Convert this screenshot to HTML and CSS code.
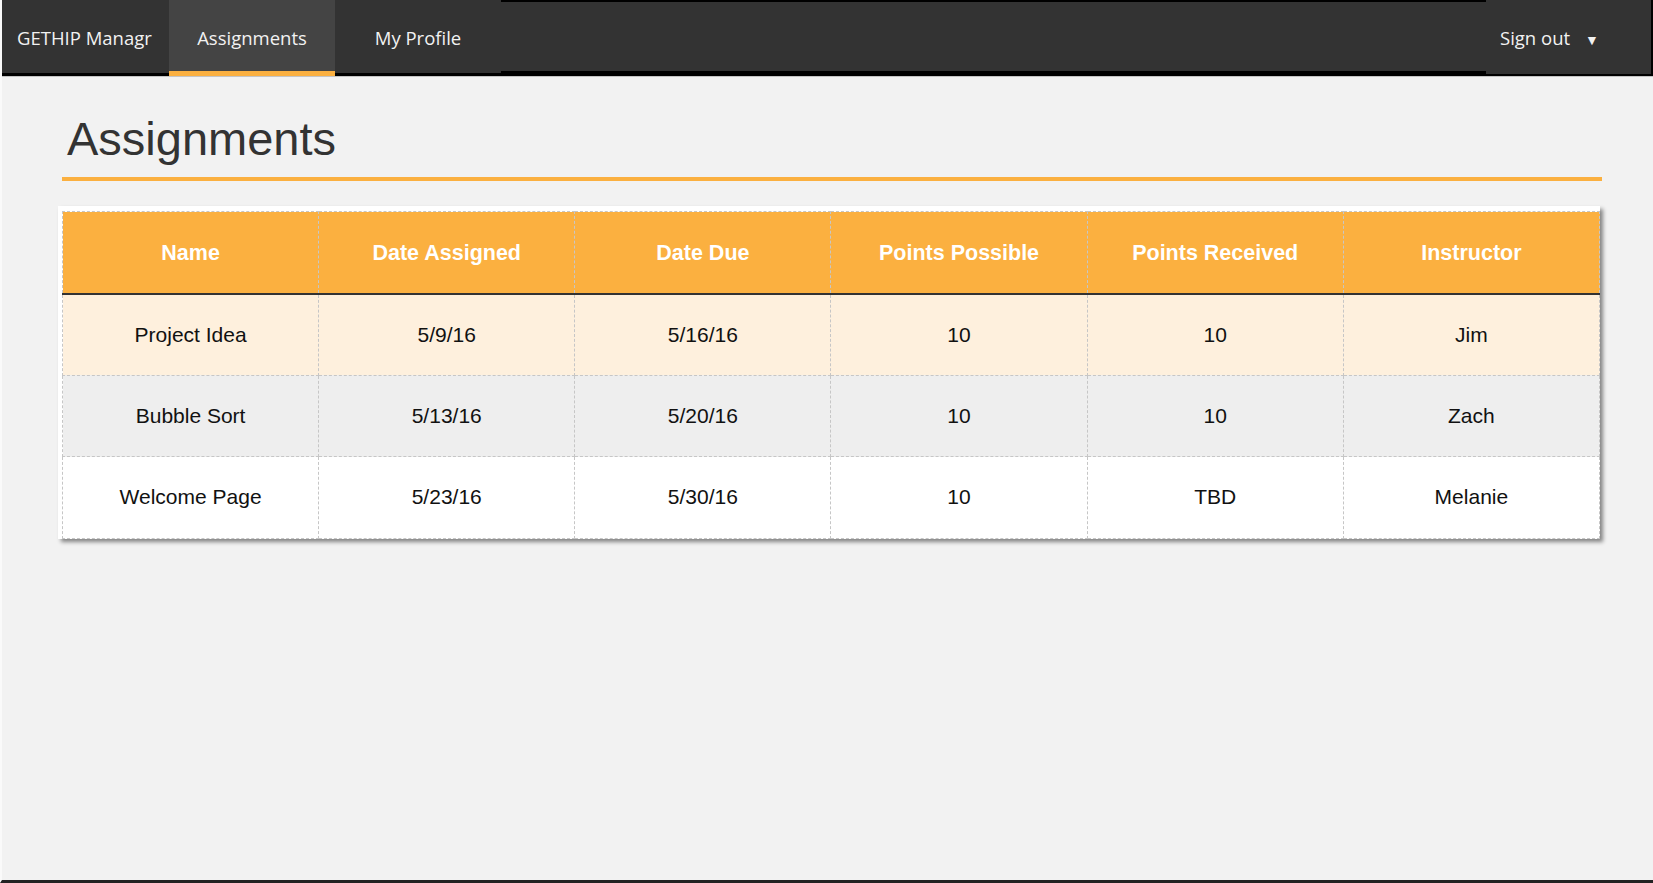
FILE: index.html
```html
<!DOCTYPE html>
<html lang="en">
<head>
<meta charset="utf-8">
<title>Assignments</title>
<link rel="stylesheet" href="styles.css">
</head>
<body>
<div class="page">
  <header class="topbar">
    <nav class="nav-left">
      <a class="nav-item brand">GETHIP Managr</a>
      <a class="nav-item tab active">Assignments</a>
      <a class="nav-item tab">My Profile</a>
    </nav>
    <div class="nav-spacer"></div>
    <div class="signout">Sign out <span class="caret">&#9660;</span></div>
  </header>
  <main class="content">
    <h1 class="title">Assignments</h1>
    <div class="table-wrap">
      <table class="grid">
        <thead>
          <tr>
            <th>Name</th>
            <th>Date Assigned</th>
            <th>Date Due</th>
            <th>Points Possible</th>
            <th>Points Received</th>
            <th>Instructor</th>
          </tr>
        </thead>
        <tbody>
          <tr class="row-a">
            <td>Project Idea</td><td>5/9/16</td><td>5/16/16</td><td>10</td><td>10</td><td>Jim</td>
          </tr>
          <tr class="row-b">
            <td>Bubble Sort</td><td>5/13/16</td><td>5/20/16</td><td>10</td><td>10</td><td>Zach</td>
          </tr>
          <tr class="row-c">
            <td>Welcome Page</td><td>5/23/16</td><td>5/30/16</td><td>10</td><td>TBD</td><td>Melanie</td>
          </tr>
        </tbody>
      </table>
    </div>
  </main>
</div>
</body>
</html>
```

FILE: styles.css
```css
* { box-sizing: border-box; }
html, body { margin: 0; padding: 0; }
body {
  background: #f2f2f2;
  font-family: "Liberation Sans", Arial, sans-serif;
}
.page {
  height: 883px;
  border-left: 2px solid #fafafa;
  border-bottom: 3px solid #222;
  overflow: hidden;
}
.topbar {
  display: flex;
  align-items: flex-start;
  height: 77px;
  background: #000;
  border-bottom: 1px solid #c4c4c4;
  margin-left: -2px;
}
.nav-left {
  display: flex;
  align-items: flex-start;
  margin-left: 2px;
}
.nav-item {
  display: flex;
  align-items: center;
  justify-content: center;
  height: 73px;
  background: #333;
  color: #f2f2f2;
  font-family: "Open Sans", "Noto Sans", sans-serif;
  font-size: 18.5px;
  text-decoration: none;
  padding-top: 1px;
}
.brand {
  width: 167px;
  justify-content: flex-start;
  padding-left: 15px;
}
.tab { width: 166px; }
.tab.active {
  background: #444;
  height: 76px;
  border-bottom: 5px solid #fbb040;
  padding-top: 3px;
}
.nav-spacer {
  flex: 1;
  margin-top: 2px;
  height: 69px;
  background: #333;
}
.signout {
  width: 165px;
  height: 74px;
  margin-right: 2px;
  background: #333;
  color: #f2f2f2;
  font-family: "Open Sans", "Noto Sans", sans-serif;
  font-size: 18.5px;
  display: flex;
  align-items: center;
  padding-left: 14px;
  padding-top: 1px;
}
.caret {
  font-size: 14px;
  margin-left: 15px;
  margin-top: 3px;
}
.content {
  padding: 35px 51px 0 60px;
}
.title {
  margin: 0;
  font-weight: normal;
  font-size: 47px;
  line-height: 54px;
  color: #333;
  padding: 0 0 11px 5px;
  border-bottom: 4px solid #fbb040;
}
.table-wrap {
  margin-top: 25px;
  margin-left: -4px;
  width: 1542px;
  background: #fff;
  padding: 5px 0 0 4px;
  box-shadow: 3px 3px 4px rgba(0, 0, 0, 0.45);
}
.grid {
  width: 100%;
  border-collapse: collapse;
  table-layout: fixed;
  text-align: center;
}
.grid th, .grid td {
  border: 1px dashed #c6c6c6;
  padding: 0;
}
.grid th {
  background: #fbb040;
  color: #fff;
  font-weight: bold;
  font-size: 21.5px;
  height: 82px;
  border-bottom: 2px solid #333;
  padding-top: 2px;
}
.grid td {
  color: #111;
  font-size: 21px;
  height: 81.5px;
}
.row-a td { background: #fef0dd; }
.row-b td { background: #eeeeee; }
.row-c td { background: #ffffff; }
```
